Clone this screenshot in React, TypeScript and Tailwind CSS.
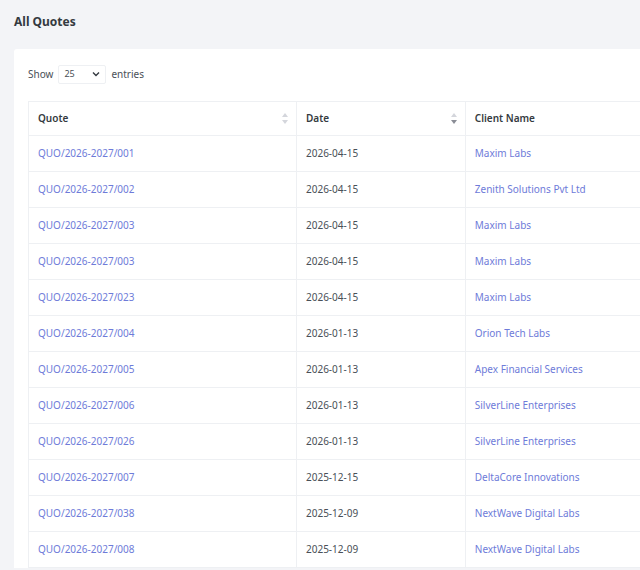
import React from "react";

const rows: [string, string, string][] = [
  ["QUO/2026-2027/001", "2026-04-15", "Maxim Labs"],
  ["QUO/2026-2027/002", "2026-04-15", "Zenith Solutions Pvt Ltd"],
  ["QUO/2026-2027/003", "2026-04-15", "Maxim Labs"],
  ["QUO/2026-2027/003", "2026-04-15", "Maxim Labs"],
  ["QUO/2026-2027/023", "2026-04-15", "Maxim Labs"],
  ["QUO/2026-2027/004", "2026-01-13", "Orion Tech Labs"],
  ["QUO/2026-2027/005", "2026-01-13", "Apex Financial Services"],
  ["QUO/2026-2027/006", "2026-01-13", "SilverLine Enterprises"],
  ["QUO/2026-2027/026", "2026-01-13", "SilverLine Enterprises"],
  ["QUO/2026-2027/007", "2025-12-15", "DeltaCore Innovations"],
  ["QUO/2026-2027/038", "2025-12-09", "NextWave Digital Labs"],
  ["QUO/2026-2027/008", "2025-12-09", "NextWave Digital Labs"],
];

function Sort({ down }: { down?: boolean }) {
  return (
    <svg width="6" height="11" viewBox="0 0 6 11">
      <path d="M3 0 L6 4 L0 4 Z" fill="#d4d6dc" />
      <path d="M3 11 L6 7 L0 7 Z" fill={down ? "#8a8d96" : "#d4d6dc"} />
    </svg>
  );
}

export default function App() {
  return (
    <div className="w-[640px] h-[570px] overflow-hidden bg-[#f3f4f7] pl-[14px] pt-[14px]" style={{ fontFamily: '"Noto Sans", "Open Sans", sans-serif' }}>
      <h1 className="text-[12px] font-bold text-[#343a40] leading-[16px]">All Quotes</h1>
      <div className="mt-[19px] bg-white rounded-tl-[3px] pl-[14px] pt-[15px] w-[700px]">
        <div className="flex items-center text-[10px] text-[#495057] h-[20px]">
          <span>Show</span>
          <div className="ml-[5px] mr-[5px] w-[48px] h-[19px] border border-[#eef0f3] rounded-[2px] flex items-center justify-between px-[5px]">
            <span className="text-[9px]">25</span>
            <svg width="8" height="6" viewBox="0 0 8 6"><path d="M1 1.5 L4 4.5 L7 1.5" stroke="#343a40" strokeWidth="1.4" fill="none" /></svg>
          </div>
          <span>entries</span>
        </div>
        <table className="mt-[17px] border-collapse text-[10px]">
          <thead>
            <tr className="h-[34px]">
              <th className="w-[270px] border border-[#eef0f3] text-left font-semibold text-[#343a40] pl-[9px] pr-[8px]">
                <div className="flex items-center justify-between">Quote<Sort /></div>
              </th>
              <th className="w-[170px] border border-[#eef0f3] text-left font-semibold text-[#343a40] pl-[9px] pr-[8px]">
                <div className="flex items-center justify-between">Date<Sort down /></div>
              </th>
              <th className="w-[250px] border border-[#eef0f3] text-left font-semibold text-[#343a40] pl-[9px]">Client Name</th>
            </tr>
          </thead>
          <tbody>
            {rows.map((r, i) => (
              <tr key={i} className="h-[36px]">
                <td className="border border-[#eef0f3] pl-[9px] text-[#6e7bd9]">{r[0]}</td>
                <td className="border border-[#eef0f3] pl-[9px] text-[#495057]">{r[1]}</td>
                <td className="border border-[#eef0f3] pl-[9px] text-[#6e7bd9]">{r[2]}</td>
              </tr>
            ))}
          </tbody>
        </table>
      </div>
    </div>
  );
}
